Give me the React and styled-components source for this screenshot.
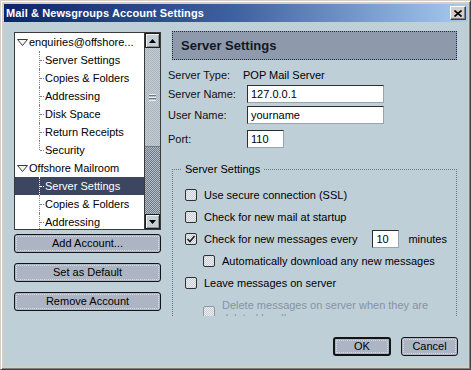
import React from 'react';
import styled, { createGlobalStyle, css } from 'styled-components';

const GlobalStyle = createGlobalStyle`
  html, body { margin: 0; padding: 0; background: #d4d0c8; }
  body {
    font-family: "Liberation Sans", Arial, sans-serif;
    font-size: 11px;
    color: #000;
  }
`;

const Window = styled.div`
  width: 471px;
  height: 370px;
  box-sizing: border-box;
  background: #d4d0c8;
  border: 1px solid;
  border-color: #d4d0c8 #404040 #404040 #d4d0c8;
  box-shadow: inset 1px 1px 0 #fff, inset -1px -1px 0 #808080;
  padding: 3px 2px 3px 3px;
  display: flex;
  flex-direction: column;
`;

const TitleBar = styled.div`
  height: 18px;
  flex: none;
  display: flex;
  align-items: center;
  justify-content: space-between;
  background: linear-gradient(90deg, #0a246a 0%, #3f62a0 50%, #a6caf0 100%);
  padding: 0 2px;
`;

const Title = styled.span`
  color: #fff;
  font-weight: bold;
  font-size: 11px;
  letter-spacing: 0.1px;
`;

const CloseButton = styled.div`
  width: 16px;
  height: 14px;
  box-sizing: border-box;
  background: #d4d0c8;
  border: 1px solid;
  border-color: #fff #404040 #404040 #fff;
  box-shadow: inset -1px -1px 0 #808080;
  display: flex;
  align-items: center;
  justify-content: center;
`;

const Body = styled.div`
  flex: 1;
  background: #bfcfd8;
  display: flex;
  flex-direction: column;
  padding: 9px 9px 10px 10px;
`;

const Main = styled.div`
  display: flex;
  gap: 7px;
`;

const LeftColumn = styled.div`
  width: 147px;
  margin-top: 1px;
  display: flex;
  flex-direction: column;
`;

const ButtonStack = styled.div`
  margin-top: 4px;
  display: flex;
  flex-direction: column;
  gap: 10px;
`;

const TreeBox = styled.div`
  width: 147px;
  height: 198px;
  box-sizing: border-box;
  border: 1px solid #3a3a3a;
  background: #fff;
  display: flex;
`;

const TreeList = styled.div`
  flex: 1;
  overflow: hidden;
`;

const TreeRow = styled.div`
  height: 18px;
  display: flex;
  align-items: center;
  white-space: nowrap;
  padding-left: ${p => (p.$child ? 24 : 2)}px;
  background: ${p => (p.$selected ? '#3c4660' : 'transparent')};
  color: ${p => (p.$selected ? '#fff' : '#000')};
`;

const Twisty = styled.svg`
  width: 11px;
  height: 7px;
  margin-right: 1px;
  flex: none;
`;

const Connector = styled.span`
  position: relative;
  width: 5px;
  height: 18px;
  margin-right: 1px;
  flex: none;
  &::before {
    content: '';
    position: absolute;
    left: 0;
    top: 0;
    height: ${p => (p.$last ? 9 : 18)}px;
    border-left: 1px dotted ${p => (p.$selected ? '#fff' : '#808080')};
  }
  &::after {
    content: '';
    position: absolute;
    left: 1px;
    top: 9px;
    width: 4px;
    border-top: 1px dotted ${p => (p.$selected ? '#fff' : '#808080')};
  }
`;

const ScrollBar = styled.div`
  width: 16px;
  flex: none;
  display: flex;
  flex-direction: column;
  border-left: 1px solid #3a3a3a;
  box-sizing: border-box;
`;

const ScrollButton = styled.div`
  height: 15px;
  flex: none;
  box-sizing: border-box;
  background: #c6ced6;
  border: 1px solid #1e1e1e;
  box-shadow: inset 1px 1px 0 #eef2f6, inset -1px -1px 0 #8a949e;
  display: flex;
  align-items: center;
  justify-content: center;
`;

const Thumb = styled.div`
  height: 99px;
  flex: none;
  box-sizing: border-box;
  background: repeating-conic-gradient(#aab4be 0% 25%, #c4ccd4 0% 50%) 0 0 / 2px 2px;
  border-bottom: 1px solid #6c7782;
  display: flex;
  align-items: center;
  justify-content: center;
`;

const Grip = styled.div`
  width: 7px;
  height: 7px;
  background: repeating-linear-gradient(180deg, #e8edf2 0 1px, #6c7782 1px 2px, transparent 2px 3px);
`;

const Track = styled.div`
  flex: 1;
  background: repeating-conic-gradient(#6e7a86 0% 25%, #b4bec8 0% 50%) 0 0 / 2px 2px;
`;

const Button = styled.div`
  height: 19px;
  box-sizing: border-box;
  width: ${p => p.$width || '100%'};
  background: #adb4c4;
  border: ${p => (p.$default ? 2 : 1)}px solid #141414;
  border-radius: 3px;
  outline: 1px dotted #d6dbe4;
  outline-offset: ${p => (p.$default ? -4 : -3)}px;
  display: flex;
  align-items: center;
  justify-content: center;
  font-size: 11px;
  line-height: 13px;
  color: #000;
`;

const RightPane = styled.div`
  width: 289px;
  height: 285px;
  overflow: hidden;
`;

const Header = styled.div`
  margin-left: 4px;
  height: 29px;
  box-sizing: border-box;
  background: #8e9aab;
  border: 1px dotted #1f2a48;
  display: flex;
  align-items: center;
  padding-left: 8px;
  font-weight: bold;
  font-size: 13px;
  color: #101828;
`;

const Fields = styled.div`
  margin-top: 6px;
  display: grid;
  grid-template-columns: 75px 1fr;
  grid-template-rows: 18px 19px 24px 23px;
  align-items: center;
`;

const FieldLabel = styled.span`
  color: #101010;
`;

const TextInput = styled.input`
  width: ${p => p.$width}px;
  height: 18px;
  box-sizing: border-box;
  flex: none;
  margin: 0 0 0 ${p => p.$indent ?? 4}px;
  padding: 0 3px;
  border: 1px solid #2e2e2e;
  border-right-color: #9aa4ae;
  border-bottom-color: #9aa4ae;
  background: #fff;
  font-family: "Liberation Sans", Arial, sans-serif;
  font-size: 11px;
  color: #000;
  outline: none;
`;

const GroupBox = styled.fieldset`
  margin: 13px 0 0 4px;
  padding: 8px 0 0 12px;
  border: 1px dotted #6a7682;
  min-width: 0;
`;

const Legend = styled.legend`
  margin-left: -4px;
  padding: 0 4px;
  line-height: 13px;
  font-size: 11px;
`;

const CheckRow = styled.div`
  min-height: 22px;
  box-sizing: border-box;
  display: flex;
  align-items: center;
  white-space: nowrap;
  padding-left: ${p => (p.$indent ? 18 : 0)}px;
  color: ${p => (p.$disabled ? '#8693a0' : '#000')};
  ${p => p.$disabled && css`
    align-items: flex-start;
    padding-top: 5px;
    padding-right: 18px;
    white-space: normal;
  `}
`;

const Box = styled.span`
  width: 12px;
  height: 12px;
  box-sizing: border-box;
  flex: none;
  margin-right: 7px;
  border: 1px solid ${p => (p.$disabled ? '#8e99a4' : '#303030')};
  border-radius: 2px;
  background: repeating-conic-gradient(#c9ced4 0% 25%, #eceff2 0% 50%) 0 0 / 2px 2px;
  display: flex;
  align-items: center;
  justify-content: center;
  ${p => p.$disabled && css`
    margin-top: 7px;
  `}
`;

const CheckText = styled.span`
  flex: 1;
  line-height: 13px;
`;

const Inline = styled.span`
  display: flex;
  align-items: center;
`;

const Suffix = styled.span`
  margin-left: 9px;
`;

const Footer = styled.div`
  margin-top: auto;
  margin-right: 1px;
  display: flex;
  justify-content: flex-end;
  gap: 10px;
`;

// only the rows that fit in the visible part of the list
const accounts = [
  {
    name: 'enquiries@offshore...',
    items: ['Server Settings', 'Copies & Folders', 'Addressing', 'Disk Space', 'Return Receipts', 'Security'],
  },
  {
    name: 'Offshore Mailroom',
    items: ['Server Settings', 'Copies & Folders', 'Addressing'],
    selected: 0,
    open: true,
  },
];

const Check = () => (
  <svg width="10" height="10" viewBox="0 0 10 10">
    <path d="M1.5 5 L4 7.5 L8.5 2" fill="none" stroke="#222" strokeWidth="1.6" />
  </svg>
);

const Checkbox = ({ checked, disabled }) => (
  <Box $disabled={disabled}>{checked && <Check />}</Box>
);

const Tree = () => (
  <TreeBox>
    <TreeList>
      {accounts.map((acc, ai) => (
        <React.Fragment key={ai}>
          <TreeRow>
            <Twisty viewBox="0 0 11 7">
              <path d="M0.5 0.5 H10.5 L5.5 6.5 Z" fill="#f4f4f4" stroke="#3a3a3a" strokeWidth="1" />
            </Twisty>
            {acc.name}
          </TreeRow>
          {acc.items.map((item, i) => {
            const selected = acc.selected === i;
            const last = !acc.open && i === acc.items.length - 1;
            return (
              <TreeRow key={i} $child $selected={selected}>
                <Connector $last={last} $selected={selected} />
                {item}
              </TreeRow>
            );
          })}
        </React.Fragment>
      ))}
    </TreeList>
    <ScrollBar>
      <ScrollButton>
        <svg width="7" height="4" viewBox="0 0 7 4"><path d="M0 4 L3.5 0 L7 4 Z" fill="#000" /></svg>
      </ScrollButton>
      <Thumb><Grip /></Thumb>
      <Track />
      <ScrollButton>
        <svg width="7" height="4" viewBox="0 0 7 4"><path d="M0 0 L3.5 4 L7 0 Z" fill="#000" /></svg>
      </ScrollButton>
    </ScrollBar>
  </TreeBox>
);

export default function App() {
  return (
    <>
      <GlobalStyle />
      <Window>
        <TitleBar>
          <Title>Mail &amp; Newsgroups Account Settings</Title>
          <CloseButton>
            <svg width="8" height="7" viewBox="0 0 8 7">
              <path d="M0.5 0.5 L7.5 6.5 M7.5 0.5 L0.5 6.5" stroke="#000" strokeWidth="1.6" />
            </svg>
          </CloseButton>
        </TitleBar>
        <Body>
          <Main>
            <LeftColumn>
              <Tree />
              <ButtonStack>
                <Button>Add Account...</Button>
                <Button>Set as Default</Button>
                <Button>Remove Account</Button>
              </ButtonStack>
            </LeftColumn>
            <RightPane>
              <Header>Server Settings</Header>
              <Fields>
                <FieldLabel>Server Type:</FieldLabel>
                <span>POP Mail Server</span>
                <FieldLabel>Server Name:</FieldLabel>
                <TextInput $width={137} defaultValue="127.0.0.1" />
                <FieldLabel>User Name:</FieldLabel>
                <TextInput $width={137} defaultValue="yourname" />
                <FieldLabel>Port:</FieldLabel>
                <TextInput $width={37} defaultValue="110" />
              </Fields>
              <GroupBox>
                <Legend>Server Settings</Legend>
                <CheckRow>
                  <Checkbox />
                  <CheckText>Use secure connection (SSL)</CheckText>
                </CheckRow>
                <CheckRow>
                  <Checkbox />
                  <CheckText>Check for new mail at startup</CheckText>
                </CheckRow>
                <CheckRow>
                  <Checkbox checked />
                  <Inline>
                    Check for new messages every
                    <TextInput $width={27} $indent={15} defaultValue="10" />
                    <Suffix>minutes</Suffix>
                  </Inline>
                </CheckRow>
                <CheckRow $indent>
                  <Checkbox />
                  <CheckText>Automatically download any new messages</CheckText>
                </CheckRow>
                <CheckRow>
                  <Checkbox />
                  <CheckText>Leave messages on server</CheckText>
                </CheckRow>
                <CheckRow $indent $disabled>
                  <Checkbox disabled />
                  <CheckText>Delete messages on server when they are deleted locally</CheckText>
                </CheckRow>
              </GroupBox>
            </RightPane>
          </Main>
          <Footer>
            <Button $width="58px" $default>OK</Button>
            <Button $width="57px">Cancel</Button>
          </Footer>
        </Body>
      </Window>
    </>
  );
}
